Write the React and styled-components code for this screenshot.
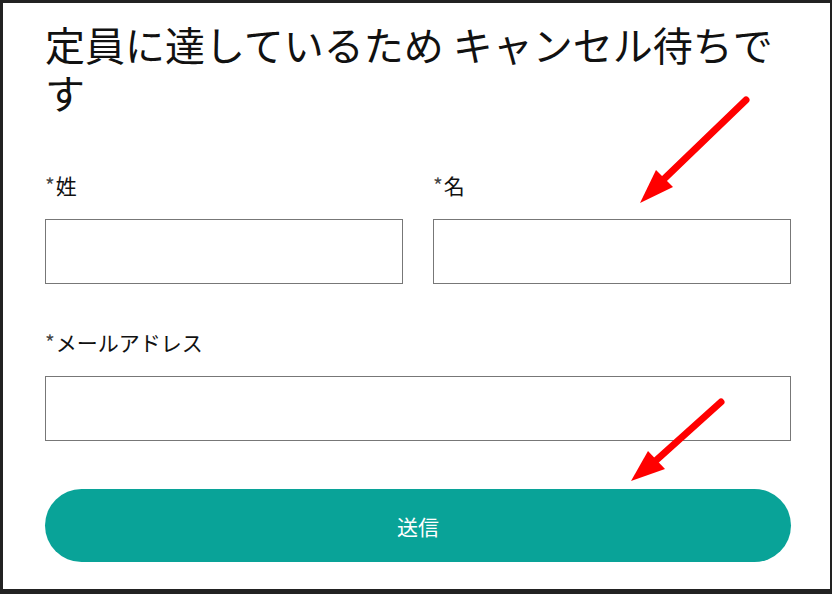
import styled, { createGlobalStyle } from "styled-components";

const GlobalStyle = createGlobalStyle`
    html, body {
        margin: 0;
        padding: 0;
        background: #fff;
    }
    body {
        font-family: "Noto Sans CJK JP", "Noto Sans", sans-serif;
        color: #111;
    }
`;

const Frame = styled.div`
    position: relative;
    width: 832px;
    height: 594px;
    box-sizing: border-box;
    border: 3px solid #222;
    border-right-width: 2px;
    border-bottom-width: 5px;
    background: #fff;
    padding: 17px 39px 0 42px;
    overflow: hidden;
`;

const Title = styled.h1`
    margin: 0;
    font-size: 40px;
    line-height: 48px;
    font-weight: 400;
    color: #111;
`;

const Form = styled.form`
    display: flex;
    flex-direction: column;
    margin-top: 54px;
`;

const NameRow = styled.div`
    display: grid;
    grid-template-columns: 1fr 1fr;
    column-gap: 30px;
`;

const Field = styled.div`
    display: flex;
    flex-direction: column;
    gap: 19px;
    margin-top: ${props => props.$spaceAbove || 0}px;
    margin-bottom: ${props => props.$spaceBelow || 0}px;
`;

const Label = styled.label`
    font-size: 21px;
    line-height: 30px;
    color: #111;

    span {
        color: #444;
        margin-right: 1px;
    }
`;

const Input = styled.input`
    display: block;
    width: 100%;
    height: 65px;
    box-sizing: border-box;
    border: 1px solid #777;
    border-radius: 0;
    background: #fff;
    font: inherit;
    padding: 0 12px;
    outline: none;
`;

const Submit = styled.button`
    height: 73px;
    border: none;
    border-radius: 37px;
    background: #09a398;
    color: #fff;
    font-family: inherit;
    font-size: 21px;
    cursor: pointer;
`;

const Annotations = styled.svg`
    position: absolute;
    left: -3px;
    top: -3px;
    pointer-events: none;
`;

const Arrow = ({ x1, y1, x2, y2, a, b }) => (
    <g>
        <line x1={x1} y1={y1} x2={(a[0] + b[0]) / 2} y2={(a[1] + b[1]) / 2} stroke="#ff0000" strokeWidth="7" strokeLinecap="round" />
        <polygon points={`${x2},${y2} ${a[0]},${a[1]} ${b[0]},${b[1]}`} fill="#ff0000" />
    </g>
);

const App = () => {
    return (
        <>
            <GlobalStyle />
            <Frame>
                <Title>定員に達しているため キャンセル待ちです</Title>
                <Form onSubmit={e => e.preventDefault()}>
                    <NameRow>
                        <Field>
                            <Label><span>*</span>姓</Label>
                            <Input type="text" />
                        </Field>
                        <Field>
                            <Label><span>*</span>名</Label>
                            <Input type="text" />
                        </Field>
                    </NameRow>
                    <Field $spaceAbove={43} $spaceBelow={48}>
                        <Label><span>*</span>メールアドレス</Label>
                        <Input type="email" />
                    </Field>
                    <Submit type="submit">送信</Submit>
                </Form>
                <Annotations width="832" height="594" viewBox="0 0 832 594">
                    <Arrow x1={746} y1={100} x2={640} y2={203} a={[656, 170]} b={[673, 187]} />
                    <Arrow x1={721} y1={402} x2={631} y2={481} a={[648, 451]} b={[665, 469]} />
                </Annotations>
            </Frame>
        </>
    );
};

export default App;
